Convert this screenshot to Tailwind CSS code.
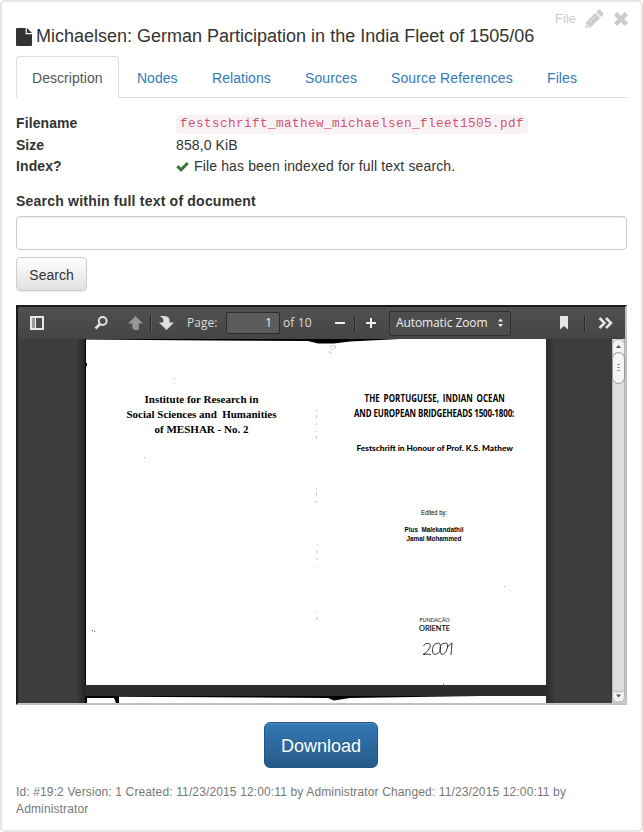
<!DOCTYPE html>
<html lang="en">
<head>
<meta charset="utf-8">
<title>Michaelsen: German Participation in the India Fleet of 1505/06</title>
<script src="https://cdn.jsdelivr.net/npm/@tailwindcss/browser@4"></script>
</head>
<body class="bg-white font-['Liberation_Sans',Arial,sans-serif] text-[14px] leading-[20px] text-[#333]">
<main class="relative h-[832px] w-[643px] overflow-hidden rounded-[5px] border-2 border-[#e5e5e5] px-[14px] pt-[23px]">
  <div class="absolute top-[7px] right-[12px] flex h-[20px] items-center text-[#ccc]">
    <span class="mr-[8px] text-[13px]">File</span>
    <svg class="mr-[9px]" width="20" height="20" viewBox="0 0 20 20" fill="currentColor"><path d="M1.200 19 2.200 13.200 11.200 4 16.200 9 7 18.100ZM12.200 3 14.200 1Q15.300.2 16.300 1L19 3.800Q19.800 4.900 19 5.900L17.200 7.900Z"/><path d="M5.300 13.200 11.400 7.100M2.700 15v1.500h1.600v1.500" fill="none" stroke="#fff" stroke-width=".7"/></svg>
    <svg width="16" height="16" viewBox="0 0 16 16"><path d="M2.600 2.600 13.400 13.400M13.400 2.600 2.600 13.400" stroke="currentColor" stroke-width="4.700"/></svg>
  </div>
  <h3 class="flex h-[22px] items-center text-[18px] leading-[22px] whitespace-nowrap">
    <svg class="mt-[1px] mr-[4px]" width="16" height="18" viewBox="0 0 16 18" fill="#333"><path d="M1 0h8.600v6.200H16V17q0 1-1 1H1q-1 0-1-1V1q0-1 1-1Z"/><path d="M10.800.3Q11.400.5 12 1L15 4q.6.5.8 1.100H10.800Z"/></svg>
    <span>Michaelsen: German Participation in the India Fleet of 1505/06</span>
  </h3>
  <nav class="mt-[9px] flex h-[42px] gap-[2px] border-b border-[#ddd] text-[#337ab7]">
    <a class="h-[42px] w-[103px] rounded-t-[4px] border border-b-0 border-[#ddd] bg-white px-[15px] pt-[11px] tracking-[0.05px] text-[#555]">Description</a>
    <a class="w-[73px] px-[16px] pt-[12px]">Nodes</a>
    <a class="w-[91px] px-[16px] pt-[12px] tracking-[0.05px]">Relations</a>
    <a class="w-[84px] px-[16px] pt-[12px] tracking-[0.1px]">Sources</a>
    <a class="w-[154px] px-[16px] pt-[12px] tracking-[0.12px] whitespace-nowrap">Source References</a>
    <a class="px-[16px] pt-[12px] tracking-[0.1px]">Files</a>
  </nav>
  <dl class="mt-[15px] grid grid-cols-[160px_1fr] grid-rows-[22px_21px_21px]">
    <dt class="font-bold tracking-[0.1px]">Filename</dt>
    <dd><code class="mt-[2px] block h-[19px] w-[352px] rounded-[4px] bg-[#f9f2f4] px-[4px] font-['Liberation_Mono',monospace] text-[12.6px] leading-[19px] tracking-[0.44px] text-[#c7254e]/80">festschrift_mathew_michaelsen_fleet1505.pdf</code></dd>
    <dt class="font-bold">Size</dt>
    <dd class="tracking-[0.1px]">858,0 KiB</dd>
    <dt class="font-bold tracking-[0.1px]">Index?</dt>
    <dd class="flex h-[20px] items-center tracking-[0.14px]"><svg class="mr-[5px]" width="13" height="11" viewBox="0 0 13 11"><path d="M1.300 5.200 5 8.800 11.800 2" fill="none" stroke="#3c763d" stroke-width="3"/></svg>File has been indexed for full text search.</dd>
  </dl>
  <label class="mt-[14px] block h-[25px] font-bold tracking-[0.21px]">Search within full text of document</label>
  <input class="block h-[34px] w-full rounded-[4px] border border-[#ccc] px-3 shadow-[inset_0_1px_1px_rgba(0,0,0,0.075)]">
  <button class="mt-[7px] block h-[34px] w-[71px] rounded-[4px] border border-[#ccc] bg-linear-to-b from-white to-[#e0e0e0] pt-[1px] shadow-[0_1px_1px_rgba(0,0,0,0.075)]">Search</button>

  <section class="mt-[14px] h-[400px] w-[611px] border-2 border-t-[#1b1b1b] border-r-[#c1c1c1] border-b-[#c1c1c1] border-l-[#1b1b1b] bg-[#3d3d3d]">
    <div class="flex h-[32px] items-center bg-linear-to-b from-[#505050] to-[#454545] font-['Open_Sans','Noto_Sans',sans-serif] text-[12px] leading-[20px] whitespace-nowrap text-[#dcdcdc]">
      <svg class="ml-[12px]" width="14" height="14" viewBox="0 0 14 14"><path d="M1 1h12v12H1Z" fill="none" stroke="#e8e8e8" stroke-width="2"/><path d="M2 2h3v10H2Z" fill="#999"/><path d="M5.500 2v10" stroke="#eee"/></svg>
      <svg class="ml-[50px]" width="14" height="14" viewBox="0 0 14 14" fill="none" stroke="#e2e2e2"><circle cx="8.700" cy="5" r="3.900" stroke-width="2"/><path d="M6 8 1.500 12.500" stroke-width="2.600"/></svg>
      <svg class="ml-[20px]" width="15" height="14" viewBox="0 0 15 14" fill="#969696"><path d="M7.500 0 15 7.500H10.800V14H7Q4.300 13.500 4.300 10V7.500H0Z"/></svg>
      <div class="ml-[7px] h-[17px] w-[2px] border-l border-[#222] bg-[#606060]"></div>
      <svg class="ml-[7px]" width="15" height="14" viewBox="0 0 15 14" fill="#dedede"><path d="M0 0H4.500Q10.500 0 10.500 4V6.500H15L7.500 14 0 6.500H4.300V4Q4.300 1.500 0 0Z"/></svg>
      <span class="ml-[13px] w-[39px] pb-[1px]">Page:</span>
      <span class="mb-[1px] h-[22px] w-[54px] rounded-[2px] border border-[#2b2b2b] bg-[#5b5b5b] pr-[7px] text-right text-[#eee]">1</span>
      <span class="ml-[3px] w-[51px] pb-[1px] tracking-[0.1px]">of 10</span>
      <svg width="12" height="12" viewBox="0 0 12 12"><path d="M1 6h10" stroke="#eee" stroke-width="2"/></svg>
      <div class="ml-[8px] h-[17px] w-[2px] border-l border-[#2a2a2a] bg-[#5a5a5a]"></div>
      <svg class="ml-[9px]" width="12" height="12" viewBox="0 0 12 12"><path d="M1 6h10M6 1v10" stroke="#eee" stroke-width="2"/></svg>
      <span class="ml-[12px] flex h-[25px] w-[122px] items-center justify-between rounded-[2px] border border-[#303030] bg-[#4d4d4d] pr-[6px] pl-[6px] text-[#eee]"><span class="tracking-[-0.1px]">Automatic Zoom</span><svg width="7" height="10" viewBox="0 0 7 10" fill="#eee"><path d="M1 3.500 3.500.5 6 3.500ZM1 6h5L3.500 9Z"/></svg></span>
      <svg class="ml-[48px]" width="10" height="14" viewBox="0 0 10 14"><path d="M1 0h8v13.500L5 10 1 13.500Z" fill="#e5e5e5"/></svg>
      <div class="ml-[15px] h-[17px] w-[2px] border-l border-[#2a2a2a] bg-[#5a5a5a]"></div>
      <svg class="ml-[12px]" width="15" height="12" viewBox="0 0 15 12" fill="none" stroke="#e5e5e5" stroke-width="2.500"><path d="M1.500 1 6.500 6 1.500 11M8 1 13 6 8 11"/></svg>
    </div>
    <div class="flex h-[364px]">
      <!-- scanned title pages; user units are window pixels -->
      <svg width="594" height="364" viewBox="18 339 594 364">
        <defs><linearGradient id="s"><stop offset="0" stop-color="#3d3d3d"/><stop offset="1" stop-color="#252525"/></linearGradient><linearGradient id="r"><stop offset="0" stop-color="#2b2b2b"/><stop offset="1" stop-color="#3d3d3d"/></linearGradient></defs>
        <path d="M18 339H612V703H18Z" fill="#3d3d3d"/>
        <path d="M76 339h9v364h-9Z" fill="url(#s)"/>
        <path d="M546 339h9v364h-9Z" fill="url(#r)"/>
        <path d="M85 685h461v11H85Z" fill="#2c2c2c"/>
        <path d="M85 339h461v346H85ZM85 696h461v7H85Z" fill="#fff"/>
        <path d="M85 339h1v346h-1ZM86 339H400L350 341.500 334 343.500H318L308 341 210 340.400 86 339.500ZM86 363h1v3h-1ZM85 696h34v7h-3l-2-5H87v5h-2ZM119 696H480L350 698 334 700.500 328 698 119 696.800Z" fill="#000"/>
        <path d="M330 347l2.500-1.500M331 349.500l2-1M333 345.500l2.500 1-1 2.500M329 353l1-2M331.500 354l-.5-1.500" fill="none" stroke="#aaa" stroke-width=".8"/>
        <path d="M316.500 410v32M316.500 488v18M317 545v26M317 612v8" stroke="#aaa" stroke-width=".7" stroke-dasharray="1 4 3 5 2 6"/>
        <path d="M92 630h1v1h-1ZM94 631h1v1h-1Z" fill="#555"/><path d="M144 457h1v1h-1ZM174 378h1v1h-1ZM443 683h1v2h-1ZM504 586h1v1h-1Z" fill="#aaa"/>
        <g font-family="'Liberation Serif',serif" font-weight="700" font-size="11.400" fill="#000">
          <text x="144.500" y="403" textLength="114" lengthAdjust="spacingAndGlyphs">Institute for Research in</text>
          <text x="126.500" y="417.700" textLength="150" lengthAdjust="spacingAndGlyphs" xml:space="preserve">Social Sciences and  Humanities</text>
          <text x="154.500" y="432.700" textLength="94" lengthAdjust="spacingAndGlyphs">of MESHAR - No. 2</text>
        </g>
        <g font-family="'Open Sans',sans-serif" font-weight="700" fill="#000">
          <text transform="translate(364.500 402) scale(.76 1)" font-size="10.500" textLength="184.500" word-spacing="2">THE PORTUGUESE, INDIAN OCEAN</text>
          <text transform="translate(354 417) scale(.76 1)" font-size="10.500" textLength="211">AND EUROPEAN BRIDGEHEADS 1500-1800:</text>
        </g>
        <text x="356.500" y="450.500" font-family="Lato,sans-serif" font-weight="900" font-size="7.900" textLength="156.500" lengthAdjust="spacingAndGlyphs">Festschrift in Honour of Prof. K.S. Mathew</text>
        <g font-family="'Liberation Sans',sans-serif" font-size="6.500" fill="#000">
          <text x="421" y="514.500" textLength="26" lengthAdjust="spacingAndGlyphs">Edited by:</text>
          <text x="404.500" y="532" font-weight="700" textLength="59" lengthAdjust="spacingAndGlyphs" xml:space="preserve">Pius  Malekandathil</text>
          <text x="406.500" y="541.300" font-weight="700" textLength="55" lengthAdjust="spacingAndGlyphs">Jamal Mohammed</text>
        </g>
        <g font-family="Lato,sans-serif" fill="#111">
          <text x="419.500" y="622.300" font-size="5.500" textLength="30" lengthAdjust="spacingAndGlyphs">FUNDAÇÃO</text>
          <text x="419" y="631" font-size="8" textLength="31" lengthAdjust="spacingAndGlyphs" stroke="#111" stroke-width=".2">ORIENTE</text>
        </g>
        <path d="M423.500 646q1.500-3.500 5-2.500t.5 5.500-6 5.500q5-1 8 .3M437 643.500q-4 0-4.500 6t4 4.500 4-7-3.500-3.500ZM444 643.500q-4 0-4 6t3.500 4.500 4-7-3.500-3.500ZM447 647l5-4q-.5 7-1 12" fill="none" stroke="#222" stroke-width=".9"/>
      </svg>
      <svg width="13" height="364" viewBox="0 0 13 364"><path d="M0 0h13v364H0Z" fill="#d2d0cd"/><rect x=".5" y="-20" width="12" height="380" rx="6" fill="#e0dfdd" stroke="#bbb7b2"/><path d="M.5 14V7Q.5.5 6.500.5T12.500 7v7M.5 350v7q0 6 6 6t6-6v-7q0 3-6 3t-6-3Z" fill="#f3f3f2" stroke="#b9b5b0"/><rect x=".5" y="13.500" width="12" height="31" rx="6" fill="#f5f5f4" stroke="#9c9994"/><path d="M4 9h5L6.500 6ZM4 355.500h5L6.500 358.500Z" fill="#555"/><path d="M5 25.500h3M5 28.500h3M5 31.500h3" stroke="#999"/></svg>
    </div>
  </section>
  <button class="mt-[17px] ml-[248px] block h-[46px] w-[114px] rounded-[6px] border border-[#245580] bg-linear-to-b from-[#337ab7] to-[#265a88] pt-[2px] text-[18px] text-white shadow-[inset_0_1px_0_rgba(255,255,255,0.15)] text-shadow-[0_-1px_0_rgb(0_0_0/0.2)]">Download</button>
  <p class="mt-[16px] w-[590px] text-[12px] leading-[17px] tracking-[0.135px] text-[#777]">Id: #19:2 Version: 1 Created: 11/23/2015 12:00:11 by Administrator Changed: 11/23/2015 12:00:11 by Administrator</p>
</main>
</body>
</html>
